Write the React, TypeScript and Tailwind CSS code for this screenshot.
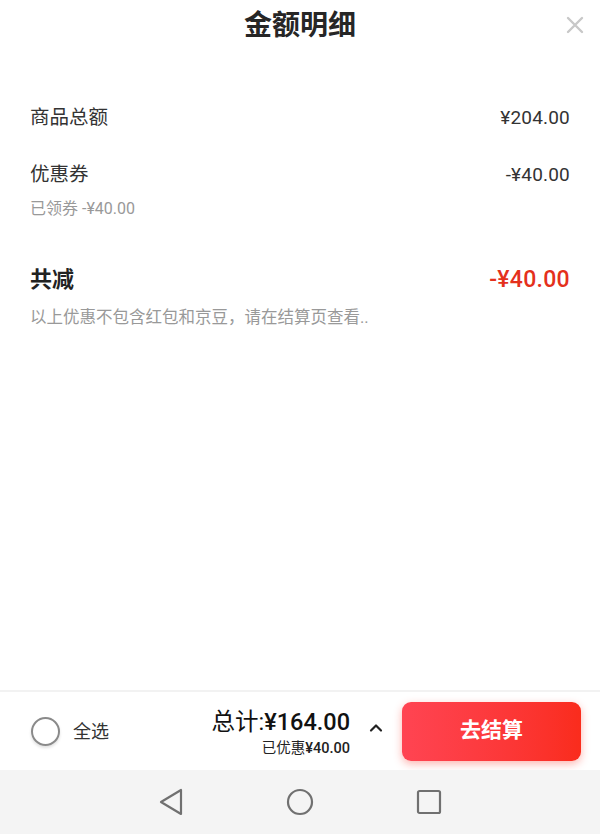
import { ChevronUp } from 'lucide-react'

const FONT = { fontFamily: 'Roboto, "Noto Sans CJK SC", sans-serif' }

// ─── Detail row ───────────────────────────────────────────────────────────────
function Row({ label, value, bold }: { label: string; value: string; bold?: boolean }) {
  return (
    <div className="flex items-center justify-between">
      <span className={bold ? 'text-[22px] font-bold leading-[30px] text-[#222]' : 'text-[19.5px] leading-[28px] text-[#333]'}>
        {label}
      </span>
      <span
        className={
          bold
            ? 'text-[23px] font-medium leading-[30px] tracking-[0.3px] text-[#e4301c]'
            : 'text-[19px] leading-[28px] tracking-[0.2px] text-[#333]'
        }
      >
        {value}
      </span>
    </div>
  )
}

export default function App() {
  return (
    <div className="flex h-[834px] w-[600px] flex-col bg-white" style={FONT}>
      {/* ── Header ── */}
      <div className="relative flex h-[52px] items-center justify-center">
        <h1 className="text-[28px] font-bold text-[#262626]">金额明细</h1>
        <span className="absolute right-[16px] top-[16px]">
          <svg width="18" height="18" viewBox="0 0 18 18" fill="none" stroke="#c8c8c8" strokeWidth="2.4" strokeLinecap="round">
            <path d="M2 2 L16 16 M16 2 L2 16" />
          </svg>
        </span>
      </div>

      {/* ── Details ── */}
      <div className="flex flex-col px-[30px] pt-[52px]">
        <Row label="商品总额" value="¥204.00" />
        <div className="mt-[29px]">
          <Row label="优惠券" value="-¥40.00" />
        </div>
        <p className="mt-[9px] text-[16px] leading-[22px] text-[#999]">已领券 -¥40.00</p>
        <div className="mt-[45px]">
          <Row label="共减" value="-¥40.00" bold />
        </div>
        <p className="mt-[12px] text-[16.5px] leading-[22px] text-[#999]">以上优惠不包含红包和京豆，请在结算页查看..</p>
      </div>

      <div className="flex-1" />

      {/* ── Bottom bar ── */}
      <div className="flex h-[80px] items-center border-t-2 border-[#f2f2f2] pl-[31px] pr-[19px]">
        <span className="h-[29px] w-[29px] rounded-full border-2 border-[#8a8a8a] shadow-[0_2px_3px_rgba(0,0,0,0.12)]" />
        <span className="ml-[13px] text-[18px] text-[#333]">全选</span>
        <div className="ml-auto mt-[2px] flex flex-col items-end">
          <span className="text-[23.5px] leading-[28px] text-[#111]">
            总计:<span className="font-medium">¥164.00</span>
          </span>
          <span className="mt-[4px] text-[14.5px] leading-[17px] text-[#222]">
            已优惠<span className="font-medium">¥40.00</span>
          </span>
        </div>
        <ChevronUp className="ml-[16px] mt-[-6px]" size={20} strokeWidth={2.6} color="#222" />
        <button className="ml-[16px] flex h-[59px] w-[179px] items-center justify-center rounded-[9px] bg-gradient-to-r from-[#ff4452] to-[#fa2c1c] text-[21px] font-bold text-white shadow-[0_3px_8px_rgba(250,44,30,0.35)]">
          去结算
        </button>
      </div>

      {/* ── Android nav bar ── */}
      <div className="flex h-[64px] items-center justify-center gap-[102px] bg-[#f4f4f4]">
        <svg width="26" height="28" viewBox="0 0 26 28" fill="none" stroke="#707070" strokeWidth="2.2" strokeLinejoin="round">
          <path d="M23 2 L23 26 L3 14 Z" />
        </svg>
        <svg width="28" height="28" viewBox="0 0 28 28" fill="none" stroke="#707070" strokeWidth="2.2">
          <circle cx="14" cy="14" r="12" />
        </svg>
        <svg width="26" height="26" viewBox="0 0 26 26" fill="none" stroke="#707070" strokeWidth="2.2">
          <rect x="2" y="2" width="22" height="22" rx="1.5" />
        </svg>
      </div>
    </div>
  )
}
